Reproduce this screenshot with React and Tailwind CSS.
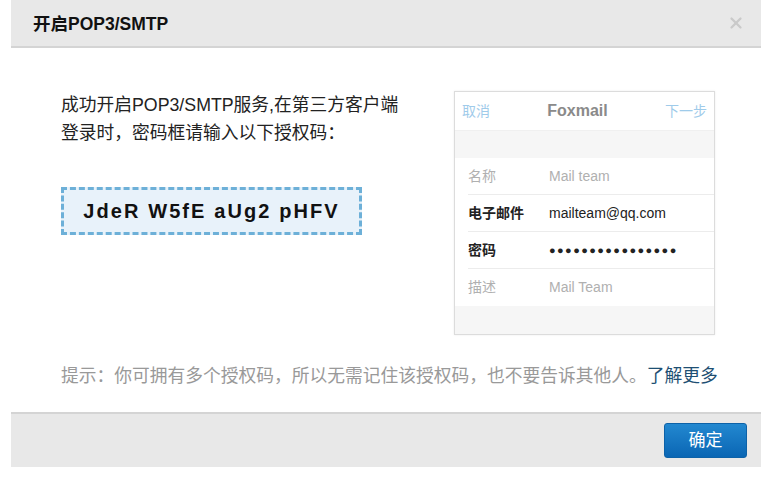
import { X } from "lucide-react";

const font = { fontFamily: '"Liberation Sans", "Noto Sans CJK SC", Arial, sans-serif' };

const rows = [
  { label: "名称", value: "Mail team", dim: true },
  { label: "电子邮件", value: "mailteam@qq.com" },
  { label: "密码", value: "●●●●●●●●●●●●●●●●", dots: true },
  { label: "描述", value: "Mail Team", dim: true },
];

const PhonePreview = () => (
  <div className="w-[261px] border border-[#dcdcdc] bg-[#f6f6f6] shadow-[0_0_2px_rgba(0,0,0,0.08)]">
    <div className="h-[39px] bg-white flex items-center justify-between px-[7px] border-b border-[#f0f0f0]">
      <span className="text-[14px] text-[#9fcbea]">取消</span>
      <span className="text-[16px] font-bold text-[#8a8a8a]">Foxmail</span>
      <span className="text-[14px] text-[#9fcbea]">下一步</span>
    </div>
    <div className="h-[27px]" />
    <div className="bg-white">
      {rows.map((row, i) => (
        <div key={row.label} className="pl-[13px]">
          <div
            className={`h-[37px] flex items-center ${i < rows.length - 1 ? "border-b border-[#ececec]" : ""}`}
          >
            <span
              className={`w-[81px] text-[14px] ${row.dim ? "text-[#b0b0b0]" : "text-[#222] font-bold"}`}
            >
              {row.label}
            </span>
            <span
              className={`${row.dots ? "text-[11px] tracking-[1.4px]" : "text-[14px]"} ${
                row.dim ? "text-[#b0b0b0]" : "text-[#222]"
              }`}
            >
              {row.value}
            </span>
          </div>
        </div>
      ))}
    </div>
    <div className="h-[28px]" />
  </div>
);

const App = () => {
  return (
    <div className="w-[768px] h-[478px] bg-white" style={font}>
      <div className="ml-[11px] w-[750px]">
        <div className="h-[48px] bg-[#e8e8e8] border-b-2 border-[#d4d4d4] flex items-center justify-between pl-[22px] pr-[16px]">
          <h1 className="text-[17.5px] font-bold text-[#111] pt-[2px]">开启POP3/SMTP</h1>
          <X size={18} strokeWidth={3} className="text-[#cacaca]" />
        </div>

        <div className="h-[364px] pt-[43px] pl-[50px] pr-[46px]">
          <div className="flex justify-between">
            <div>
              <p className="text-[17.75px] leading-[28px] text-[#222]">
                成功开启POP3/SMTP服务,在第三方客户端
                <br />
                登录时，密码框请输入以下授权码：
              </p>
              <div className="mt-[40px] w-[301px] h-[48px] border-[3px] border-dashed border-[#6db0d8] bg-[#e8f2fa] flex items-center justify-center">
                <span className="text-[20px] font-bold tracking-[2.1px] text-[#111]">JdeR W5fE aUg2 pHFV</span>
              </div>
            </div>
            <PhonePreview />
          </div>
          <p className="mt-[29px] text-[17.75px] leading-[24px] text-[#999] whitespace-nowrap">
            提示：你可拥有多个授权码，所以无需记住该授权码，也不要告诉其他人。
            <a className="text-[#1e4f73]">了解更多</a>
          </p>
        </div>

        <div className="h-[55px] bg-[#e8e8e8] border-t-2 border-[#d4d4d4] flex items-center justify-end pr-[14px]">
          <button className="w-[83px] h-[35px] rounded-[3px] border border-[#0d62a8] bg-gradient-to-b from-[#2288d0] to-[#0a66b4] text-white text-[17px]">
            确定
          </button>
        </div>
      </div>
    </div>
  );
};

export default App;
